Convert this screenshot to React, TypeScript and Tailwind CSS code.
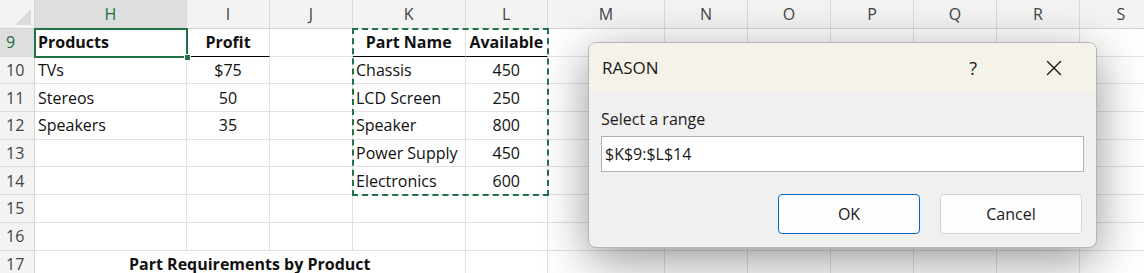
import { X } from "lucide-react";

const cols = ["H", "I", "J", "K", "L", "M", "N", "O", "P", "Q", "R", "S"];
const rowNums = [9, 10, 11, 12, 13, 14, 15, 16, 17];

type Cell = { text: string; bold?: boolean; align?: "left" | "center"; underline?: boolean };

// contenu des cellules par ligne, indexé par colonne
const data: Record<number, Partial<Record<string, Cell>>> = {
  9: {
    H: { text: "Products", bold: true, underline: true },
    I: { text: "Profit", bold: true, align: "center", underline: true },
    K: { text: "Part Name", bold: true, align: "center", underline: true },
    L: { text: "Available", bold: true, align: "center", underline: true },
  },
  10: { H: { text: "TVs" }, I: { text: "$75", align: "center" }, K: { text: "Chassis" }, L: { text: "450", align: "center" } },
  11: { H: { text: "Stereos" }, I: { text: "50", align: "center" }, K: { text: "LCD Screen" }, L: { text: "250", align: "center" } },
  12: { H: { text: "Speakers" }, I: { text: "35", align: "center" }, K: { text: "Speaker" }, L: { text: "800", align: "center" } },
  13: { K: { text: "Power Supply" }, L: { text: "450", align: "center" } },
  14: { K: { text: "Electronics" }, L: { text: "600", align: "center" } },
};

function GridCell({ cell }: { cell?: Cell }) {
  return (
    <div
      className={`flex items-center border-r border-b overflow-visible whitespace-nowrap text-[16px] text-[#111] ${
        cell?.underline ? "border-b-black" : "border-b-[#e1e1e1]"
      } border-r-[#e1e1e1] ${cell?.align === "center" ? "justify-center" : "justify-start pl-[3px]"} ${
        cell?.bold ? "font-bold" : ""
      }`}
    >
      {cell?.text}
    </div>
  );
}

function Sheet() {
  return (
    <div className="grid grid-cols-[35px_152px_83px_83px_112.5px_82.5px_117px_83px_83px_83px_83px_83px_83px] grid-rows-[29px_repeat(9,27.7px)]">
      {/* coin supérieur gauche */}
      <div className="relative bg-[#f3f3f3] border-r border-b border-[#d4d4d4]">
        <svg className="absolute right-[3px] bottom-[3px]" width="16" height="16" viewBox="0 0 16 16">
          <polygon points="16,0 16,16 0,16" fill="#dcdcdc" />
        </svg>
      </div>
      {cols.map((c) => (
        <div
          key={c}
          className={`flex items-center justify-center text-[16px] border-r border-b ${
            c === "H" ? "bg-[#dedede] text-[#1e6f3f] border-b-[#1e6f3f]" : "bg-[#f3f3f3] text-[#444] border-b-[#d4d4d4]"
          } border-r-[#dadada]`}
        >
          {c}
        </div>
      ))}

      {rowNums.map((r) => (
        <>
          <div
            key={`h${r}`}
            className={`flex items-center justify-start pl-[6px] text-[16px] border-b border-r ${
              r === 9 ? "bg-[#dedede] text-[#1e6f3f] border-r-[#1e6f3f]" : "bg-[#f3f3f3] text-[#444] border-r-[#d4d4d4]"
            } border-b-[#dadada]`}
          >
            {r}
          </div>
          {r === 17 ? (
            <>
              <div className="col-span-4 flex items-center justify-center text-[16px] font-bold text-[#111] border-r border-b border-[#e1e1e1] whitespace-nowrap">
                Part Requirements by Product
              </div>
              {cols.slice(4).map((c) => (
                <GridCell key={`${r}${c}`} />
              ))}
            </>
          ) : (
            cols.map((c) => <GridCell key={`${r}${c}`} cell={data[r]?.[c]} />)
          )}
        </>
      ))}
    </div>
  );
}

function RangeDialog() {
  return (
    <div className="absolute left-[588px] top-[42px] w-[509px] h-[206px] rounded-[8px] border border-[#b4b4b4] bg-[#f0f0f0] overflow-hidden shadow-[0_12px_48px_rgba(0,0,0,0.42)] flex flex-col">
      <div className="h-[50px] bg-[#f5f3e9] flex items-center pl-[13px] pr-[29px] text-[#1a1a1a]">
        <span className="text-[17px] flex-1">RASON</span>
        <span className="text-[18px] mr-[64px]">?</span>
        <X size={26} strokeWidth={1.3} />
      </div>
      <div className="flex flex-col pl-[12px] pr-[12px] pt-[14px]">
        <div className="text-[16px] leading-[24px] text-[#1a1a1a]">Select a range</div>
        <div className="mt-[5px] h-[36px] bg-white border border-[#b0b0b0] flex items-center pl-[3px] text-[16px] text-[#1a1a1a]">
          $K$9:$L$14
        </div>
        <div className="mt-[22px] flex justify-end gap-[20px] pr-[2px]">
          <div className="w-[142px] h-[40px] rounded-[4px] border border-[#0067c0] bg-[#fdfdfd] flex items-center justify-center text-[16px] text-[#1a1a1a]">
            OK
          </div>
          <div className="w-[142px] h-[40px] rounded-[4px] border border-[#d3d3d3] bg-[#fdfdfd] flex items-center justify-center text-[16px] text-[#1a1a1a]">
            Cancel
          </div>
        </div>
      </div>
    </div>
  );
}

export default function App() {
  return (
    <div className="relative w-[1144px] h-[273px] overflow-hidden bg-white font-['Open_Sans',sans-serif]">
      <Sheet />
      {/* cellule active H9 */}
      <div className="absolute left-[34px] top-[28px] w-[154px] h-[30px] border-2 border-[#217346]" />
      <div className="absolute left-[184px] top-[54px] w-[7px] h-[7px] bg-[#217346] border border-white" />
      {/* plage copiée K9:L14 */}
      <div className="absolute left-[352px] top-[28px] w-[197px] h-[168px] border-2 border-dashed border-[#217346]" />
      <RangeDialog />
    </div>
  );
}
